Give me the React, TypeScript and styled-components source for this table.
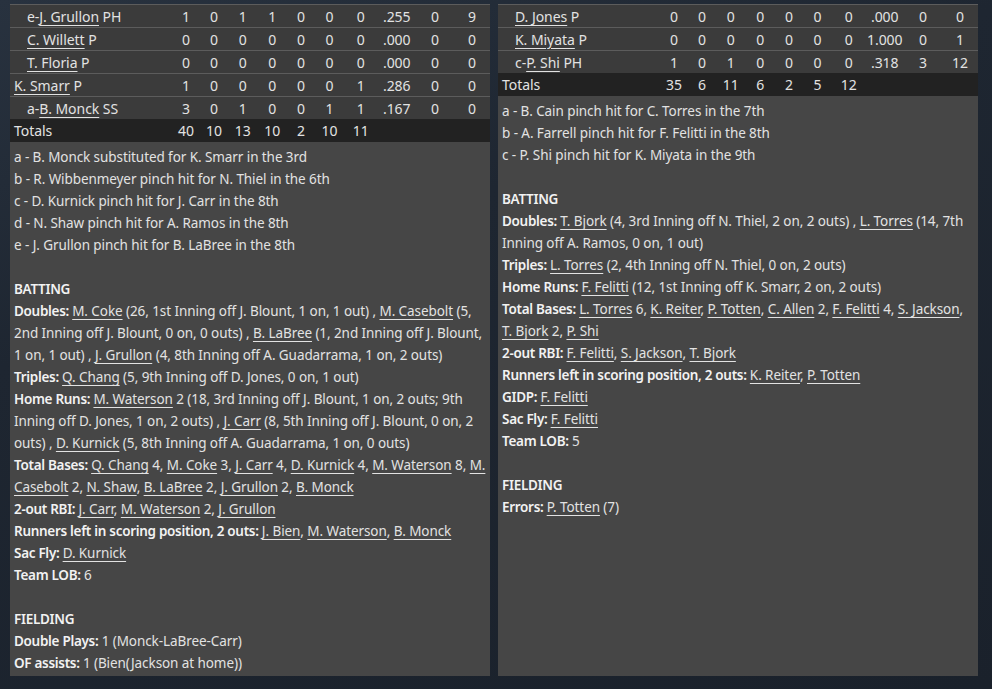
import React from 'react';
import styled, { createGlobalStyle } from 'styled-components';

const GlobalStyle = createGlobalStyle`
  html, body {
    margin: 0;
    padding: 0;
  }
  body {
    width: 992px;
    height: 689px;
    overflow: hidden;
    background: linear-gradient(160deg, #28323f 0%, #1e2631 35%, #1a212b 100%);
    font-family: "Noto Sans", "Open Sans", sans-serif;
    color: #e2e2e2;
  }
`;

const Page = styled.div`
  display: flex;
  align-items: stretch;
  gap: 8px;
  padding: 4px 14px 0 10px;
`;

const Panel = styled.div`
  width: 480px;
  background: #464646;
  display: flex;
  flex-direction: column;
`;

const COLS = '162px 28px 28px 29.5px 29.5px 28px 29px 33.5px 38.5px 38px 36px';

const Row = styled.div<{ $total?: boolean }>`
  display: grid;
  grid-template-columns: ${COLS};
  height: 23px;
  align-items: center;
  box-sizing: border-box;
  border-top: ${(p) => (p.$total ? 'none' : '1px solid #5c5c5c')};
  background: ${(p) => (p.$total ? '#222222' : '#3b3b3b')};
  font-size: 14px;
  letter-spacing: -0.05px;
`;

const NameCell = styled.div<{ $sub?: boolean }>`
  padding-left: ${(p) => (p.$sub ? '17px' : '4px')};
  white-space: nowrap;
`;

const Num = styled.div`
  text-align: center;
`;

const Link = styled.span`
  text-decoration: underline;
  text-underline-offset: 3px;
  text-decoration-thickness: 1px;
`;

const Notes = styled.div<{ $padRight: number }>`
  padding: 4px ${(p) => p.$padRight}px 2px 4px;
  font-size: 13.5px;
  line-height: 22px;
  letter-spacing: -0.08px;
`;

const Line = styled.div`
  min-height: 22px;
`;

const Label = styled.span`
  font-weight: 600;
  letter-spacing: -0.3px;
  color: #f2f2f2;
`;

type Player = { pre?: string; name: string; pos: string; sub: boolean; stats: string[] };

const rich = (s: string) =>
  s.split(/(\[[^\]]+\])/).map((part, i) =>
    part.startsWith('[') ? <Link key={i}>{part.slice(1, -1)}</Link> : <React.Fragment key={i}>{part}</React.Fragment>
  );

const StatTable: React.FC<{ players: Player[]; totals: string[] }> = ({ players, totals }) => (
  <div>
    {players.map((p, i) => (
      <Row key={i}>
        <NameCell $sub={p.sub}>
          {p.pre}
          <Link>{p.name}</Link> {p.pos}
        </NameCell>
        {p.stats.map((s, j) => (
          <Num key={j}>{s}</Num>
        ))}
      </Row>
    ))}
    <Row $total>
      <NameCell>Totals</NameCell>
      {totals.map((s, j) => (
        <Num key={j}>{s}</Num>
      ))}
    </Row>
  </div>
);

type NoteLine = { label?: string; text?: string };

const NoteBlock: React.FC<{ lines: NoteLine[]; padRight: number }> = ({ lines, padRight }) => (
  <Notes $padRight={padRight}>
    {lines.map((l, i) => (
      <Line key={i}>
        {l.label && <Label>{l.label} </Label>}
        {l.text && rich(l.text)}
      </Line>
    ))}
  </Notes>
);

const awayPlayers: Player[] = [
  { pre: 'e-', name: 'J. Grullon', pos: 'PH', sub: true, stats: ['1', '0', '1', '1', '0', '0', '0', '.255', '0', '9'] },
  { name: 'C. Willett', pos: 'P', sub: true, stats: ['0', '0', '0', '0', '0', '0', '0', '.000', '0', '0'] },
  { name: 'T. Floria', pos: 'P', sub: true, stats: ['0', '0', '0', '0', '0', '0', '0', '.000', '0', '0'] },
  { name: 'K. Smarr', pos: 'P', sub: false, stats: ['1', '0', '0', '0', '0', '0', '1', '.286', '0', '0'] },
  { pre: 'a-', name: 'B. Monck', pos: 'SS', sub: true, stats: ['3', '0', '1', '0', '0', '1', '1', '.167', '0', '0'] },
];

const homePlayers: Player[] = [
  { name: 'D. Jones', pos: 'P', sub: true, stats: ['0', '0', '0', '0', '0', '0', '0', '.000', '0', '0'] },
  { name: 'K. Miyata', pos: 'P', sub: true, stats: ['0', '0', '0', '0', '0', '0', '0', '1.000', '0', '1'] },
  { pre: 'c-', name: 'P. Shi', pos: 'PH', sub: true, stats: ['1', '0', '1', '0', '0', '0', '0', '.318', '3', '12'] },
];

const awayNotes: NoteLine[] = [
  { text: 'a - B. Monck substituted for K. Smarr in the 3rd' },
  { text: 'b - R. Wibbenmeyer pinch hit for N. Thiel in the 6th' },
  { text: 'c - D. Kurnick pinch hit for J. Carr in the 8th' },
  { text: 'd - N. Shaw pinch hit for A. Ramos in the 8th' },
  { text: 'e - J. Grullon pinch hit for B. LaBree in the 8th' },
  {},
  { label: 'BATTING' },
  {
    label: 'Doubles:',
    text: '[M. Coke] (26, 1st Inning off J. Blount, 1 on, 1 out) , [M. Casebolt] (5, 2nd Inning off J. Blount, 0 on, 0 outs) , [B. LaBree] (1, 2nd Inning off J. Blount, 1 on, 1 out) , [J. Grullon] (4, 8th Inning off A. Guadarrama, 1 on, 2 outs)',
  },
  { label: 'Triples:', text: '[Q. Chang] (5, 9th Inning off D. Jones, 0 on, 1 out)' },
  {
    label: 'Home Runs:',
    text: '[M. Waterson] 2 (18, 3rd Inning off J. Blount, 1 on, 2 outs; 9th Inning off D. Jones, 1 on, 2 outs) , [J. Carr] (8, 5th Inning off J. Blount, 0 on, 2 outs) , [D. Kurnick] (5, 8th Inning off A. Guadarrama, 1 on, 0 outs)',
  },
  {
    label: 'Total Bases:',
    text: '[Q. Chang] 4, [M. Coke] 3, [J. Carr] 4, [D. Kurnick] 4, [M. Waterson] 8, [M. Casebolt] 2, [N. Shaw], [B. LaBree] 2, [J. Grullon] 2, [B. Monck]',
  },
  { label: '2-out RBI:', text: '[J. Carr], [M. Waterson] 2, [J. Grullon]' },
  { label: 'Runners left in scoring position, 2 outs:', text: '[J. Bien], [M. Waterson], [B. Monck]' },
  { label: 'Sac Fly:', text: '[D. Kurnick]' },
  { label: 'Team LOB:', text: '6' },
  {},
  { label: 'FIELDING' },
  { label: 'Double Plays:', text: '1 (Monck-LaBree-Carr)' },
  { label: 'OF assists:', text: '1 (Bien(Jackson at home))' },
];

const homeNotes: NoteLine[] = [
  { text: 'a - B. Cain pinch hit for C. Torres in the 7th' },
  { text: 'b - A. Farrell pinch hit for F. Felitti in the 8th' },
  { text: 'c - P. Shi pinch hit for K. Miyata in the 9th' },
  {},
  { label: 'BATTING' },
  {
    label: 'Doubles:',
    text: '[T. Bjork] (4, 3rd Inning off N. Thiel, 2 on, 2 outs) , [L. Torres] (14, 7th Inning off A. Ramos, 0 on, 1 out)',
  },
  { label: 'Triples:', text: '[L. Torres] (2, 4th Inning off N. Thiel, 0 on, 2 outs)' },
  { label: 'Home Runs:', text: '[F. Felitti] (12, 1st Inning off K. Smarr, 2 on, 2 outs)' },
  {
    label: 'Total Bases:',
    text: '[L. Torres] 6, [K. Reiter], [P. Totten], [C. Allen] 2, [F. Felitti] 4, [S. Jackson], [T. Bjork] 2, [P. Shi]',
  },
  { label: '2-out RBI:', text: '[F. Felitti], [S. Jackson], [T. Bjork]' },
  { label: 'Runners left in scoring position, 2 outs:', text: '[K. Reiter], [P. Totten]' },
  { label: 'GIDP:', text: '[F. Felitti]' },
  { label: 'Sac Fly:', text: '[F. Felitti]' },
  { label: 'Team LOB:', text: '5' },
  {},
  { label: 'FIELDING' },
  { label: 'Errors:', text: '[P. Totten] (7)' },
];

const App: React.FC = () => (
  <>
    <GlobalStyle />
    <Page>
      <Panel>
        <StatTable players={awayPlayers} totals={['40', '10', '13', '10', '2', '10', '11']} />
        <NoteBlock lines={awayNotes} padRight={1} />
      </Panel>
      <Panel>
        <StatTable players={homePlayers} totals={['35', '6', '11', '6', '2', '5', '12']} />
        <NoteBlock lines={homeNotes} padRight={8} />
      </Panel>
    </Page>
  </>
);

export default App;
